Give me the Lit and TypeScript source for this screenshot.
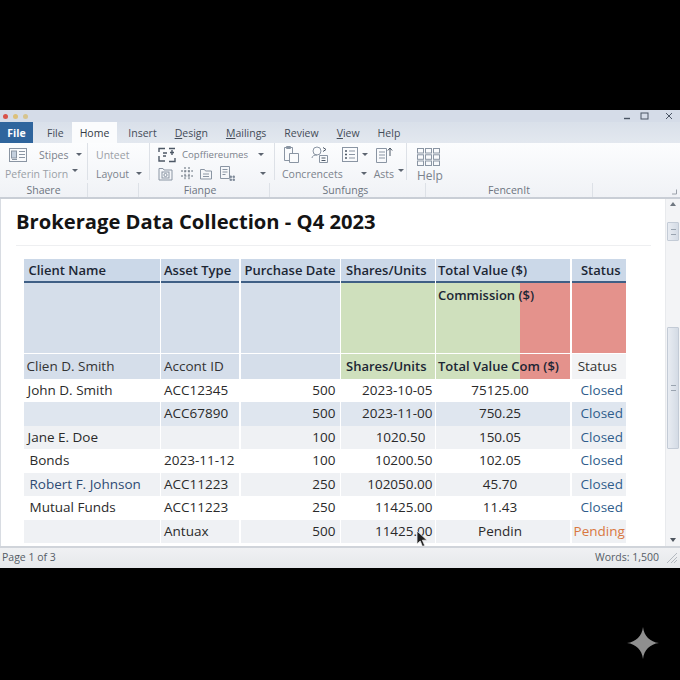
import { LitElement, html, css, svg } from 'lit';
import { customElement } from 'lit/decorators.js';

type Row = {
  cells: string[];
  tone: string;
  status: string;
  nameClass?: string;
  datePad?: number;
};

const ROWS: Row[] = [
  { cells: ['John D. Smith', 'ACC12345', '500', '2023-10-05', '75125.00'], tone: 'white', status: 'Closed' },
  { cells: ['', 'ACC67890', '500', '2023-11-00', '750.25'], tone: 'blue', status: 'Closed' },
  { cells: ['Jane E. Doe', '', '100', '1020.50', '150.05'], tone: 'grey', status: 'Closed', datePad: 9 },
  { cells: ['Bonds', '2023-11-12', '100', '10200.50', '102.05'], tone: 'white', status: 'Closed', nameClass: 'inset' },
  { cells: ['Robert F. Johnson', 'ACC11223', '250', '102050.00', '45.70'], tone: 'grey', status: 'Closed', nameClass: 'inset link' },
  { cells: ['Mutual Funds', 'ACC11223', '250', '11425.00', '11.43'], tone: 'white', status: 'Closed', nameClass: 'inset' },
  { cells: ['', 'Antuax', '500', '11425.00', 'Pendin'], tone: 'grey', status: 'Pending' },
];

const icon = (w: number, h: number, body: unknown) => html`
  <svg class="icon" width=${w} height=${h} viewBox="0 0 ${w} ${h}">${body}</svg>
`;

const ICONS = {
  styles: icon(18, 16, svg`<rect x="0.5" y="1.5" width="17" height="13"/><rect x="2.5" y="4" width="5" height="7" fill="#c4d0de"/><path d="M10 4.5h6M10 7.5h6M10 10.5h6M3 12.5h5"/>`),
  frame: icon(18, 16, svg`<path d="M1 5V1.5h6M1 9v5h6M11 1.5h6M11 14.5h6V11M5 6h4M5 9h3" stroke="#4d5866" stroke-width="1.4"/><path d="M14 3v5M12 5.5h4" stroke="#4d5866" stroke-width="1.4"/>`),
  photo: icon(15, 15, svg`<path d="M1 2.5h4l1 1.5h8v10H1z"/><rect x="4" y="6" width="7" height="6"/><circle cx="7.5" cy="9" r="1.6"/>`),
  move: icon(14, 15, svg`<path d="M5 1v13M9 1v13M1 5h12M1 10h12" stroke-dasharray="2 1.4" stroke="#5c6875"/>`),
  folder: icon(12, 13, svg`<path d="M.5 2.5h4l1 1.5h6v8H.5zM3 7h6M3 9.5h6"/>`),
  sheet: icon(15, 15, svg`<path d="M.5.5h9v12H.5zM2.5 3.5h5M2.5 6h5M2.5 8.5h3"/><path d="M10 10h1.5v1.5H10zM13 10h1.5v1.5H13zM10 13h1.5v1.5H10zM13 13h1.5v1.5H13z" fill="#5c6875"/>`),
  paste: icon(15, 17, svg`<path d="M.5 1.5h8v13H.5z"/><path d="M5.5 7.5h9v9h-9z" fill="#fbfcfd"/><path d="M2.5.5h4v2h-4z"/>`),
  people: icon(17, 17, svg`<circle cx="6" cy="5" r="4"/><path d="M1 12c0-2 2-3 5-3"/><path d="M8.5 9.5h8v7h-8z" fill="#fbfcfd"/><path d="M10.5 12h4M10.5 14.5h4M12 1.5l3 2-3 2" stroke="#4d5866"/>`),
  list: icon(16, 15, svg`<rect x="0.5" y="0.5" width="15" height="14"/><path d="M3 4h2M3 7.5h2M3 11h2" stroke="#4d5866" stroke-width="1.6"/><path d="M7 4h6M7 7.5h6M7 11h6"/>`),
  sort: icon(17, 16, svg`<path d="M.5 1.5h10v14H.5zM3 5h6M3 8h6M3 11h6"/><path d="M14 9V1M11.8 3.5 14 1l2.2 2.5" stroke="#4d5866"/>`),
  grid: icon(23, 18, svg`<rect x="0.5" y="0.5" width="6" height="4.5"/><rect x="8.5" y="0.5" width="6" height="4.5"/><rect x="16.5" y="0.5" width="6" height="4.5"/><rect x="0.5" y="6.8" width="6" height="4.5"/><rect x="8.5" y="6.8" width="6" height="4.5"/><rect x="16.5" y="6.8" width="6" height="4.5"/><rect x="0.5" y="13" width="6" height="4.5"/><rect x="8.5" y="13" width="6" height="4.5"/><rect x="16.5" y="13" width="6" height="4.5"/>`),
};

@customElement('app-root')
export class AppRoot extends LitElement {
  static styles = css`
    :host {
      display: block;
      position: relative;
      width: 680px;
      height: 680px;
      padding-top: 110px;
      box-sizing: border-box;
      background: #000;
      font-family: 'Open Sans', 'Noto Sans', sans-serif;
      overflow: hidden;
    }

    .window {
      height: 458px;
      display: flex;
      flex-direction: column;
      background: #fff;
    }

    .titlebar {
      height: 12px;
      flex: none;
      display: flex;
      align-items: center;
      padding: 0 7px 0 3px;
      background: #d5dce8;
    }
    .dot {
      width: 5px;
      height: 5px;
      border-radius: 50%;
      margin-right: 5px;
    }
    .controls {
      margin-left: auto;
      display: flex;
      align-items: center;
      gap: 9px;
    }
    .controls svg {
      display: block;
      fill: none;
      stroke: #4a5564;
    }

    .tabs {
      height: 21px;
      flex: none;
      display: flex;
      align-items: stretch;
      background: linear-gradient(#d9e0ea, #e3e8ef);
      font-size: 10.5px;
      color: #444c58;
    }
    .tab {
      padding: 0 9px;
      display: flex;
      align-items: center;
      white-space: nowrap;
    }
    .tab u {
      text-underline-offset: 1px;
    }
    .file {
      width: 33px;
      box-sizing: border-box;
      padding: 0;
      justify-content: center;
      margin-right: 5px;
      background: #2f659d;
      color: #fff;
      font-weight: 700;
    }
    .active {
      background: #fbfcfd;
      color: #333a45;
      padding: 0 8px 0 8px;
      margin: 0 0 0 -1px;
    }
    .after-active {
      margin-left: 2px;
    }

    .ribbon {
      flex: none;
      background: linear-gradient(#fcfdfe, #f0f2f6);
      border-bottom: 2px solid #c9ced6;
      color: #7b828c;
      font-size: 10.5px;
    }
    .tools {
      height: 40px;
      display: flex;
    }
    .group {
      box-sizing: border-box;
      padding-top: 3px;
      display: flex;
      flex-direction: column;
      gap: 2px;
      border-right: 1px solid #dde1e7;
      margin-bottom: 3px;
    }
    .line {
      height: 17px;
      flex: none;
      display: flex;
      align-items: center;
      white-space: nowrap;
    }
    .icon {
      display: block;
      flex: none;
      fill: none;
      stroke: #8a95a3;
      stroke-width: 1;
    }
    .caret {
      width: 0;
      height: 0;
      flex: none;
      border-left: 3px solid transparent;
      border-right: 3px solid transparent;
      border-top: 3px solid #5d6570;
    }
    .caret.up {
      margin-top: -6px;
    }
    .faint {
      color: #9a9fa6;
    }
    .g1 {
      width: 88px;
      padding-left: 5px;
    }
    .g2 {
      width: 62px;
      padding-left: 8px;
    }
    .g3 {
      width: 125px;
      padding-left: 8px;
    }
    .g3 .small {
      font-size: 9.6px;
    }
    .g4 {
      width: 132px;
      padding-left: 7px;
    }
    .g5 {
      padding: 5px 0 0 10px;
      border: none;
      gap: 1px;
      font-size: 12px;
    }
    .m4 { margin-left: 4px; }
    .m6 { margin-left: 6px; }
    .m7 { margin-left: 7px; }
    .m8 { margin-left: 8px; }
    .m10 { margin-left: 10px; }
    .m12 { margin-left: 12px; }
    .m14 { margin-left: 14px; }

    .labels {
      height: 14px;
      display: flex;
      font-size: 10.5px;
      line-height: 15px;
      color: #6d747f;
      text-align: center;
    }
    .labels div {
      border-right: 1px solid #dde1e7;
      box-sizing: border-box;
    }
    .labels .corner {
      flex: 1;
      border: none;
      position: relative;
    }
    .corner svg {
      position: absolute;
      right: 3px;
      bottom: 2px;
    }

    .body {
      flex: 1;
      min-height: 0;
      display: flex;
      border-left: 1px solid #d8dce2;
    }
    .page {
      flex: 1;
      min-width: 0;
      padding: 7px 0 0 15px;
    }
    h1 {
      margin: 0;
      height: 39px;
      width: 635px;
      border-bottom: 1px solid #eeeff1;
      font-size: 20.2px;
      line-height: 30px;
      font-weight: 700;
      color: #141414;
      box-sizing: content-box;
    }

    .table {
      margin: 13px 0 0 7.5px;
      display: grid;
      grid-template-columns: 136px 78px 99px 93.5px 134px 54.5px;
      column-gap: 1.5px;
      font-size: 13.5px;
      color: #2a2a2a;
    }
    .cell {
      height: 23.43px;
      line-height: 23px;
      padding: 0 4px;
      box-sizing: border-box;
      white-space: nowrap;
      overflow: hidden;
    }
    .head {
      height: 24px;
      padding: 0 5px;
      line-height: 22px;
      white-space: nowrap;
      box-sizing: border-box;
      font-size: 13px;
      font-weight: 600;
      color: #1c2634;
      background: #cbd8e8;
      border-bottom: 2px solid #3f5f85;
    }
    .head.tight {
      padding: 0 3px;
    }
    .head.date {
      padding: 0 4px;
    }
    .head.total {
      padding: 0 2px;
    }
    .head.center {
      padding: 0 0 0 4px;
    }
    .tall {
      height: 70px;
      margin-bottom: 1px;
      padding: 0 2px;
      background: #d5deea;
      font-size: 13px;
      font-weight: 600;
      line-height: 24px;
      color: #1c2634;
      box-sizing: border-box;
    }
    .green {
      background: #cfe0bd;
    }
    .red {
      background: #e4928c;
    }
    .split {
      background: linear-gradient(to right, #cfe0bd 84.5px, #e4928c 84.5px);
    }
    .sub {
      height: 25px;
      padding: 0 3px 1px;
      line-height: 24px;
      white-space: nowrap;
      box-sizing: border-box;
      background: #d5deea;
      color: #333;
    }
    .sub.b {
      font-size: 13px;
      font-weight: 600;
      color: #1c2634;
    }
    .sub.plain {
      background: #f2f3f5;
      text-align: center;
      padding-right: 6px;
    }
    .sub.green {
      background: #cfe0bd;
      padding-left: 5px;
    }
    .sub.split {
      background: linear-gradient(to right, #cfe0bd 84.5px, #e4928c 84.5px);
      padding-left: 2px;
    }
    .white { background: #fff; }
    .blue { background: #dfe6ef; }
    .grey { background: #eff1f4; }
    .right { text-align: right; }
    .center { text-align: center; }
    .inset { padding-left: 6px; }
    .link { color: #2d4a73; }
    .cell.amount { padding-right: 10px; }
    .cell.closed { color: #2f5d8c; padding: 0 0 0 6px; }
    .cell.pending { color: #d9783f; padding: 0 0 0 1px; }

    .scroll {
      width: 15px;
      flex: none;
      box-sizing: border-box;
      padding: 3px 1px 0;
      display: flex;
      flex-direction: column;
      align-items: center;
      background: #f3f4f6;
      border-left: 1px solid #e8eaed;
    }
    .arrow {
      flex: none;
      width: 0;
      height: 0;
      border-left: 3px solid transparent;
      border-right: 3px solid transparent;
    }
    .arrow.top {
      border-bottom: 4px solid #6f7780;
    }
    .arrow.bottom {
      margin-top: auto;
      margin-bottom: 4px;
      border-top: 4px solid #4e555e;
    }
    .thumb {
      flex: none;
      width: 12px;
      box-sizing: border-box;
      border: 1px solid #c3cbd6;
      border-radius: 1px;
      background: linear-gradient(to right, #e8ecf2, #d4dbe5);
      display: flex;
      align-items: center;
      justify-content: center;
    }
    .thumb i {
      display: block;
      width: 5px;
      height: 4px;
      border-top: 1px solid #9aa4b0;
      border-bottom: 1px solid #9aa4b0;
    }
    .t1 {
      height: 19px;
      margin-top: 16px;
    }
    .t2 {
      height: 122px;
      margin-top: 86px;
    }

    .status {
      height: 22px;
      flex: none;
      display: flex;
      align-items: center;
      justify-content: space-between;
      padding: 0 2px 3px 2px;
      box-sizing: border-box;
      background: linear-gradient(#f0f1f3, #e6e8eb);
      border-top: 2px solid #d0d4da;
      font-size: 10.5px;
      color: #555c66;
    }
    .status .words {
      display: flex;
      align-items: center;
      gap: 5px;
    }

    .cursor {
      position: absolute;
      left: 416px;
      top: 530px;
    }
    .spark {
      position: absolute;
      left: 627px;
      top: 627px;
    }
  `;

  private renderRibbon() {
    return html`
      <div class="ribbon">
        <div class="tools">
          <div class="group g1">
            <div class="line"><span class="m4">${ICONS.styles}</span><span class="m12">Stipes</span><span class="caret m8"></span></div>
            <div class="line faint">Peferin Tiorn<span class="caret up m4"></span></div>
          </div>
          <div class="group g2">
            <div class="line faint">Unteet</div>
            <div class="line">Layout<span class="caret m7"></span></div>
          </div>
          <div class="group g3">
            <div class="line">${ICONS.frame}<span class="m6 small">Copffiereumes</span><span class="caret m10"></span></div>
            <div class="line">
              ${ICONS.photo}<span class="m7">${ICONS.move}</span><span class="m6">${ICONS.folder}</span><span class="m8">${ICONS.sheet}</span>
              <span class="caret" style="margin-left:25px"></span>
            </div>
          </div>
          <div class="group g4">
            <div class="line">
              <span style="margin-left:2px">${ICONS.paste}</span><span class="m12">${ICONS.people}</span><span class="m14">${ICONS.list}</span><span class="caret m4"></span><span class="m8">${ICONS.sort}</span>
            </div>
            <div class="line">Concrencets<span class="caret" style="margin-left:18px"></span><span class="m7">Asts</span><span class="caret up m4"></span></div>
          </div>
          <div class="group g5">
            ${ICONS.grid}
            <div class="line">Help</div>
          </div>
        </div>
        <div class="labels">
          <div style="width:88px">Shaere</div>
          <div style="width:51px"></div>
          <div style="width:131px;padding-right:8px">Fianpe</div>
          <div style="width:156px;padding-right:4px">Sunfungs</div>
          <div style="width:167px">FencenIt</div>
          <div class="corner">
            <svg width="6" height="6" viewBox="0 0 6 6" fill="none" stroke="#9aa1aa"><path d="M1 5h4.5V.5"/></svg>
          </div>
        </div>
      </div>
    `;
  }

  private renderTable() {
    return html`
      <div class="table">
        <div class="head">Client Name</div>
        <div class="head tight">Asset Type</div>
        <div class="head date">Purchase Date</div>
        <div class="head">Shares/Units</div>
        <div class="head total">Total Value ($)</div>
        <div class="head center">Status</div>

        <div class="tall"></div>
        <div class="tall"></div>
        <div class="tall"></div>
        <div class="tall green"></div>
        <div class="tall split">Commission ($)</div>
        <div class="tall red"></div>

        <div class="sub">Clien D. Smith</div>
        <div class="sub">Accont ID</div>
        <div class="sub"></div>
        <div class="sub b green">Shares/Units</div>
        <div class="sub b split">Total Value Com ($)</div>
        <div class="sub plain">Status</div>

        ${ROWS.map(
          (r) => html`
            <div class="cell ${r.tone} ${r.nameClass ?? ''}">${r.cells[0]}</div>
            <div class="cell ${r.tone}" style="padding-left:3px">${r.cells[1]}</div>
            <div class="cell ${r.tone} right">${r.cells[2]}</div>
            <div class="cell ${r.tone} right" style="padding-right:${r.datePad ?? 2}px">${r.cells[3]}</div>
            <div class="cell ${r.tone} center amount">${r.cells[4]}</div>
            <div class="cell ${r.tone} center ${r.status.toLowerCase()}">${r.status}</div>
          `,
        )}
      </div>
    `;
  }

  render() {
    return html`
      <div class="window">
        <div class="titlebar">
          <span class="dot" style="background:#d9534a"></span>
          <span class="dot" style="background:#dcc07a"></span>
          <span class="dot" style="background:#d6c48e"></span>
          <div class="controls">
            <svg width="8" height="8" viewBox="0 0 8 8"><path d="M1 6.5h6" stroke-width="1.4"/></svg>
            <svg width="9" height="8" viewBox="0 0 9 8"><rect x="1" y="1" width="7" height="6"/></svg>
            <svg width="8" height="8" viewBox="0 0 8 8" style="margin-left:7px"><path d="M1 1l6 6M7 1L1 7"/></svg>
          </div>
        </div>
        <div class="tabs">
          <div class="tab file">File</div>
          <div class="tab">File</div>
          <div class="tab active">Home</div>
          <div class="tab after-active">Insert</div>
          <div class="tab"><span><u>D</u>esign</span></div>
          <div class="tab"><span><u>M</u>ailings</span></div>
          <div class="tab">Review</div>
          <div class="tab"><span><u>V</u>iew</span></div>
          <div class="tab">Help</div>
        </div>
        ${this.renderRibbon()}
        <div class="body">
          <div class="page">
            <h1>Brokerage Data Collection - Q4 2023</h1>
            ${this.renderTable()}
          </div>
          <div class="scroll">
            <span class="arrow top"></span>
            <div class="thumb t1"><i></i></div>
            <div class="thumb t2"><i></i></div>
            <span class="arrow bottom"></span>
          </div>
        </div>
        <div class="status">
          <span>Page 1 of 3</span>
          <span class="words">
            Words: 1,500
            <svg width="14" height="14" viewBox="0 0 14 14" fill="none" stroke="#b4b9c0"><path d="M13 3L3 13M13 7l-6 6M13 10l-3 3"/></svg>
          </span>
        </div>
      </div>
      <svg class="cursor" width="12" height="18" viewBox="0 0 12 18">
        <path d="M1 1v13l3.2-3 2.3 5.5 2.2-1-2.3-5.3H11z" fill="#222" stroke="#eee" stroke-width="0.8"/>
      </svg>
      <svg class="spark" width="32" height="32" viewBox="0 0 32 32">
        <path d="M16 0C17 9 23 15 32 16 23 17 17 23 16 32 15 23 9 17 0 16 9 15 15 9 16 0z" fill="#8f8f8f"/>
      </svg>
    `;
  }
}
